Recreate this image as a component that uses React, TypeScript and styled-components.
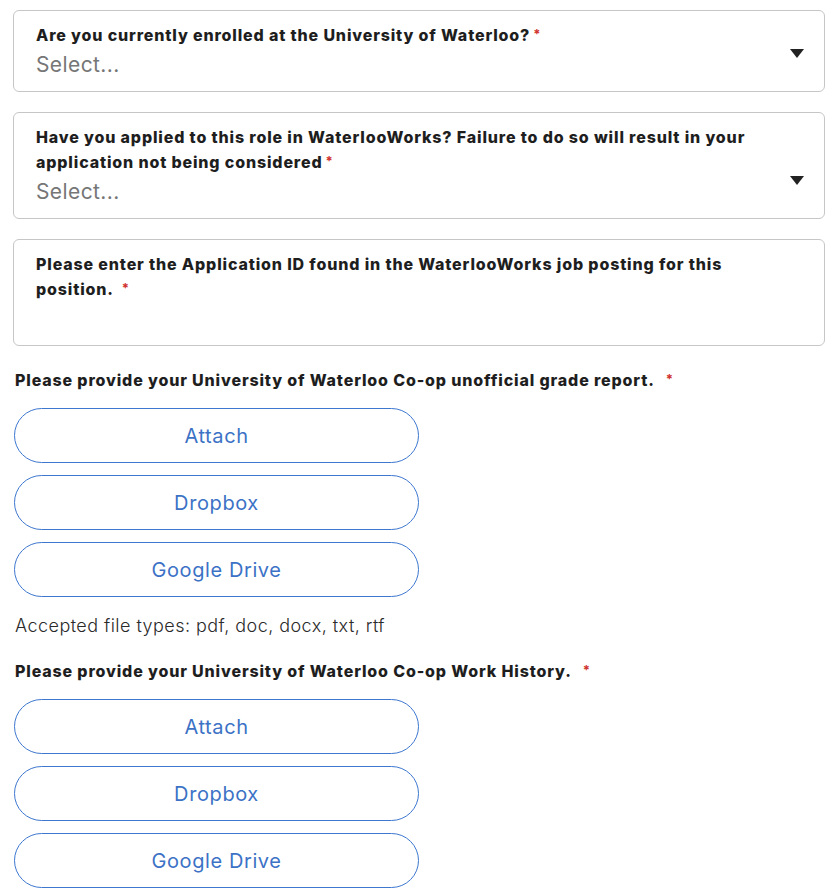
import React from "react";
import styled, { createGlobalStyle } from "styled-components";

const Global = createGlobalStyle`
  html, body { margin: 0; padding: 0; background: #ffffff; }
  body { font-family: Inter, "Noto Sans", sans-serif; color: #1f1f1f; }
`;

const Page = styled.div`
  padding: 10px 4px 0 13px;
  display: flex;
  flex-direction: column;
  width: 812px;
`;

const Field = styled.div<{ $h: number }>`
  box-sizing: border-box;
  height: ${(p) => p.$h}px;
  border: 1px solid #c6c6c6;
  border-radius: 6px;
  padding: 12px 22px 0 22px;
  position: relative;
  margin-bottom: 20px;
`;

const Label = styled.div`
  font-size: 16px;
  font-weight: 800;
  line-height: 25px;
  color: #1e1e1e;
  letter-spacing: 0.85px;
`;

const Req = styled.span<{ $gap: number }>`
  display: inline-block;
  color: #d0312d;
  font-size: 13px;
  font-weight: 700;
  line-height: 10px;
  position: relative;
  top: -2px;
  margin-left: ${(p) => p.$gap}px;
`;

const SelectRow = styled.div`
  display: flex;
  align-items: center;
  height: 30px;
  margin-top: 1px;
`;

const Placeholder = styled.span`
  font-size: 21px;
  color: #767676;
  font-weight: 400;
  letter-spacing: 0.4px;
`;

const Caret = styled.div`
  position: absolute;
  right: 20px;
  bottom: 33px;
  width: 0;
  height: 0;
  border-left: 7.5px solid transparent;
  border-right: 7.5px solid transparent;
  border-top: 9px solid #222;
`;

const Section = styled.div`
  padding-left: 2px;
  display: flex;
  flex-direction: column;
`;

const SectionLabel = styled(Label)`
  margin-top: 2px;
  margin-bottom: 15px;
`;

const Buttons = styled.div`
  display: flex;
  flex-direction: column;
  gap: 12px;
  margin-left: -1px;
`;

const UploadButton = styled.button`
  box-sizing: border-box;
  width: 405px;
  height: 55px;
  border: 1px solid #3d77cf;
  border-radius: 28px;
  background: #fff;
  color: #3c72c6;
  font-family: Inter, "Noto Sans", sans-serif;
  font-size: 20px;
  font-weight: 400;
  letter-spacing: 0.6px;
  cursor: pointer;
`;

const Note = styled.div`
  font-size: 18px;
  color: #2a2a2a;
  font-weight: 300;
  line-height: 26px;
  letter-spacing: 0.45px;
  margin: 16px 0 18px 0;
`;

const buttons = ["Attach", "Dropbox", "Google Drive"];

export default function App() {
  return (
    <>
      <Global />
      <Page>
        <Field $h={82}>
          <Label>
            Are you currently enrolled at the University of Waterloo?<Req $gap={3}>*</Req>
          </Label>
          <SelectRow>
            <Placeholder>Select...</Placeholder>
          </SelectRow>
          <Caret />
        </Field>
        <Field $h={107}>
          <Label>
            Have you applied to this role in WaterlooWorks? Failure to do so will result in your
            application not being considered<Req $gap={3}>*</Req>
          </Label>
          <SelectRow>
            <Placeholder>Select...</Placeholder>
          </SelectRow>
          <Caret />
        </Field>
        <Field $h={107}>
          <Label>
            Please enter the Application ID found in the WaterlooWorks job posting for this
            position.<Req $gap={8}>*</Req>
          </Label>
        </Field>
        <Section>
          <SectionLabel>
            Please provide your University of Waterloo Co-op unofficial grade report.
            <Req $gap={11}>*</Req>
          </SectionLabel>
          <Buttons>
            {buttons.map((b) => (
              <UploadButton key={b}>{b}</UploadButton>
            ))}
          </Buttons>
          <Note>Accepted file types: pdf, doc, docx, txt, rtf</Note>
          <SectionLabel>
            Please provide your University of Waterloo Co-op Work History.
            <Req $gap={11}>*</Req>
          </SectionLabel>
          <Buttons>
            {buttons.map((b) => (
              <UploadButton key={b + "2"}>{b}</UploadButton>
            ))}
          </Buttons>
        </Section>
      </Page>
    </>
  );
}
